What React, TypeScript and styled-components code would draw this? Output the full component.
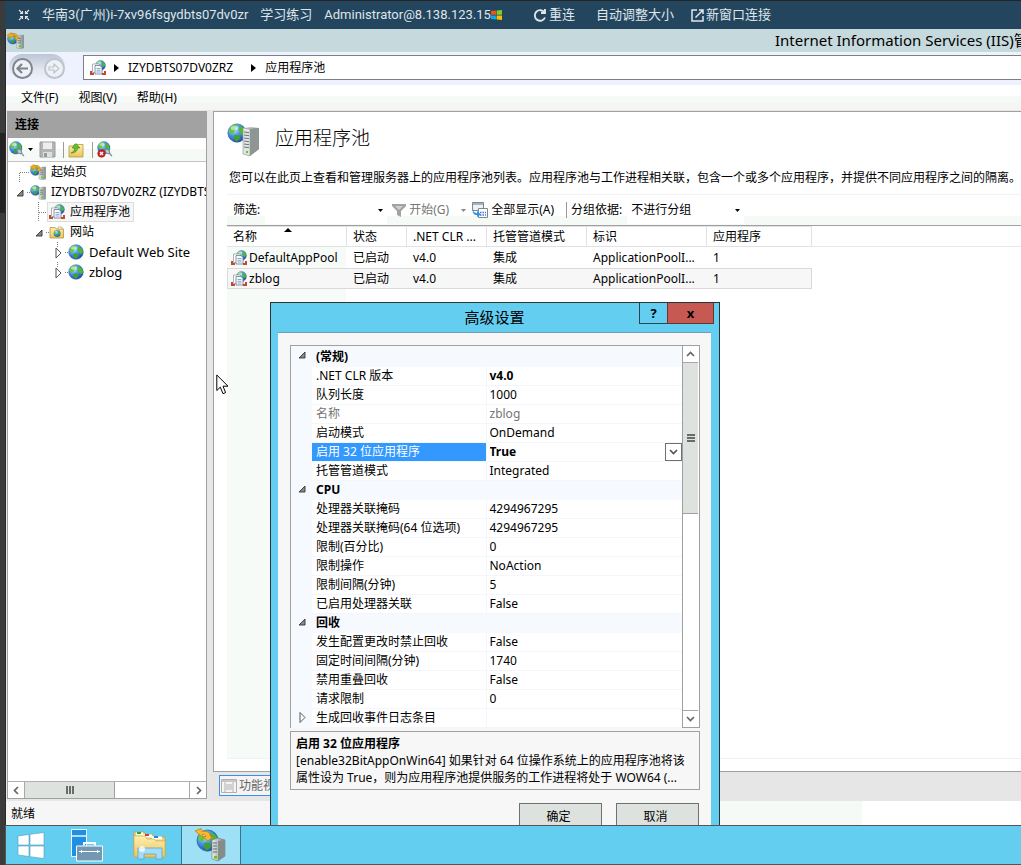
import React from "react";
import styled, { createGlobalStyle, css } from "styled-components";

const uiFont = `"Noto Sans", "Noto Sans CJK SC", sans-serif`;
const remoteFont = `Roboto, "Noto Sans CJK SC", sans-serif`;

const GlobalStyle = createGlobalStyle`
  * { box-sizing: border-box; }
  body {
    margin: 0;
    overflow: hidden;
    background: #fff;
    color: #000;
    font: 12px/18px ${uiFont};
  }
  button, input, select { font: inherit; color: inherit; }
  svg { display: block; flex: none; }
`;

/* ---------- shell ---------- */

const Shell = styled.div`
  display: flex;
  height: 100vh;
  border-top: 1px solid #242424;
`;

const Rail = styled.div`
  flex: none;
  width: 5px;
  background: linear-gradient(#3b3b3b 132px, #232323 132px, #232323 212px, #3b3b3b 212px);
`;

const Screen = styled.div`
  flex: 1;
  min-width: 0;
  display: flex;
  flex-direction: column;
`;

const RemoteBar = styled.header`
  flex: none;
  display: flex;
  align-items: center;
  height: 28px;
  padding-left: 13px;
  background: #24455e;
  color: #dfe5ea;
  font-family: ${remoteFont};
  font-size: 13px;
  white-space: nowrap;
`;

const RemoteText = styled.span`
  margin-left: 12px;
`;

const RemoteAction = styled.button<{ $gap: number }>`
  display: flex;
  align-items: center;
  gap: 2px;
  margin-left: ${(p) => p.$gap}px;
  padding: 0;
  border: 0;
  background: none;
  white-space: nowrap;
`;

const Desktop = styled.div`
  position: relative;
  flex: 1;
  min-height: 0;
  display: flex;
  flex-direction: column;
  overflow: hidden;
  border-left: 1px solid #2a2a2a;
  background: #e7e7e7;
`;

/* ---------- manager window chrome ---------- */

const TitleBar = styled.div`
  flex: none;
  display: flex;
  justify-content: space-between;
  align-items: center;
  height: 23px;
  padding-left: 1px;
  background: #c6d9dd;
  overflow: hidden;
`;

const WindowTitle = styled.h1`
  width: 246px;
  margin: 0;
  font-size: 15px;
  line-height: 23px;
  font-weight: 400;
  white-space: nowrap;
`;

const NavBar = styled.div`
  flex: none;
  display: flex;
  gap: 18px;
  height: 33px;
  padding: 2px 0 0 3px;
  background: #eef2fe;
`;

const NavButtons = styled.div`
  flex: none;
  display: flex;
  gap: 11px;
  width: 56px;
  height: 26px;
  padding: 4px 0 0 3px;
  border-radius: 13px;
  background: linear-gradient(#bcc6d3, #e2e7f0 60%, #eef2fe);
`;

const NavButton = styled.button<{ $dim?: boolean }>`
  flex: none;
  width: 21px;
  height: 21px;
  padding: 0;
  border: 2px solid ${(p) => (p.$dim ? "#bdc4cb" : "#7d858d")};
  border-radius: 50%;
  background: #eef1f5;
  color: ${(p) => (p.$dim ? "#bdc4cb" : "#7d858d")};
`;

const AddressBar = styled.nav`
  flex: 1;
  display: flex;
  align-items: center;
  height: 25px;
  margin-top: 1px;
  padding-left: 6px;
  border: 1px solid #7c7f86;
  border-right: 0;
  background: #fff;
  white-space: nowrap;
`;

const CrumbIcon = styled.span`
  margin-right: 8px;
`;

const Crumb = styled.a<{ $last?: boolean }>`
  margin: 0 ${(p) => (p.$last ? 0 : 18)}px 0 9px;
  color: #000;
  text-decoration: none;
`;

const MenuBar = styled.div`
  flex: none;
  display: flex;
  gap: 20px;
  height: 25px;
  padding-left: 15px;
  background: linear-gradient(#fff 11px, #f5faf6 11px, #f5faf6 18px, #f5f5f5 18px);
`;

const MenuItem = styled.button`
  padding: 0;
  border: 0;
  background: none;
  white-space: nowrap;
`;

const Workspace = styled.main`
  flex: 1;
  min-height: 0;
  display: flex;
  gap: 6px;
  padding-left: 1px;
`;

/* ---------- connections pane ---------- */

const SidePane = styled.aside`
  flex: none;
  width: 200px;
  display: flex;
  flex-direction: column;
  margin: 1px 0 2px;
  border: 1px solid #a0a0a0;
  background: #fff;
`;

const PaneHeader = styled.h2`
  flex: none;
  height: 26px;
  margin: 0;
  padding-left: 7px;
  background: #a2a2a2;
  font-size: 12px;
  line-height: 26px;
`;

const PaneTools = styled.div`
  flex: none;
  display: flex;
  align-items: center;
  height: 24px;
  padding-left: 1px;
  border-bottom: 1px solid #c4c4c4;
  background: linear-gradient(#fff 11px, #f5faf6 11px);
`;

const ToolButton = styled.button<{ $gap?: number }>`
  display: flex;
  align-items: center;
  gap: 2px;
  margin-left: ${(p) => p.$gap ?? 0}px;
  padding: 0;
  border: 0;
  background: none;
`;

const ToolRule = styled.span<{ $before?: number }>`
  flex: none;
  width: 1px;
  height: 16px;
  margin: 0 4px 0 ${(p) => p.$before ?? 7}px;
  background: #9a9a9a;
`;

const Tree = styled.ul`
  flex: 1;
  min-height: 0;
  margin: 0;
  padding: 0;
  list-style: none;
  overflow: hidden;
`;

const TreeRow = styled.li`
  display: flex;
  align-items: center;
  height: 20px;
  white-space: nowrap;
`;

const TreeLabel = styled.a<{ $selected?: boolean; $wide?: boolean }>`
  display: flex;
  align-items: center;
  gap: 5px;
  height: 20px;
  color: #000;
  font-size: ${(p) => (p.$wide ? 13 : 12)}px;
  text-decoration: none;
  ${(p) =>
    p.$selected &&
    css`
      padding: 0 4px 0 2px;
      background: #f6f6f6;
      outline: 1px solid #dcdcdc;
      outline-offset: -1px;
    `}
`;

const HScroll = styled.div`
  flex: none;
  display: flex;
  height: 17px;
  border-top: 1px solid #b0b0b0;
`;

const ScrollButton = styled.button<{ $side: "left" | "right" | "up" | "down" }>`
  flex: none;
  display: grid;
  place-items: center;
  width: ${(p) => (p.$side === "left" || p.$side === "right" ? 17 : 15)}px;
  height: 16px;
  padding: 0;
  border: 0 solid #a8a8a8;
  border-${(p) => ({ left: "right", right: "left", up: "bottom", down: "top" })[p.$side]}-width: 1px;
  background: #fff;
  color: #666;
`;

const HThumb = styled.div`
  display: grid;
  place-items: center;
  width: 90px;
  border-right: 1px solid #a0a0a0;
  background: #dde2df;
`;

const Filler = styled.div`
  flex: 1;
`;

/* ---------- content pane ---------- */

const ContentPane = styled.section`
  flex: 1;
  min-width: 0;
  display: flex;
  flex-direction: column;
  margin-top: 1px;
`;

const Feature = styled.div`
  flex: 1;
  min-height: 0;
  display: flex;
  flex-direction: column;
  padding-left: 13px;
  border: 1px solid #a0a0a0;
  border-right: 0;
  background: #fff;
`;

const FeatureHead = styled.div`
  flex: none;
  display: flex;
  align-items: center;
  gap: 14px;
  height: 57px;
  padding-bottom: 2px;
`;

const FeatureTitle = styled.h2`
  margin: 0;
  padding-bottom: 4px;
  font-size: 19px;
  line-height: 28px;
  font-weight: 300;
`;

const Description = styled.p`
  flex: none;
  margin: 0 0 7px 2px;
  line-height: 18px;
  white-space: nowrap;
`;

const FilterBar = styled.div`
  flex: none;
  display: flex;
  align-items: center;
  height: 32px;
  border-top: 1px solid #f2f2f2;
  border-bottom: 1px solid #a0a0a0;
  background: linear-gradient(#fff 21px, #f5faf6 21px);
  white-space: nowrap;
`;

const FilterLabel = styled.label<{ $gap?: number }>`
  flex: none;
  padding-left: ${(p) => p.$gap ?? 6}px;
`;

const Combo = styled.div<{ $width: number }>`
  flex: none;
  display: flex;
  align-items: center;
  width: ${(p) => p.$width}px;
  height: 27px;
  margin-left: 5px;
  padding: 0 4px;
  background: #fff;
`;

const plainField = css`
  flex: 1;
  min-width: 0;
  height: 18px;
  padding: 0;
  border: 0;
  outline: 0;
  background: none;
  appearance: none;
`;

const FilterInput = styled.input`
  ${plainField}
`;

const GroupSelect = styled.select`
  ${plainField}
`;

const BarButton = styled.button<{ $dim?: boolean; $gap: number }>`
  flex: none;
  display: flex;
  align-items: center;
  gap: 3px;
  margin-left: ${(p) => p.$gap}px;
  padding: 0;
  border: 0;
  background: none;
  color: ${(p) => (p.$dim ? "#757575" : "#000")};
`;

const ListArea = styled.div`
  flex: 1;
  min-height: 0;
  margin-bottom: 12px;
  border-bottom: 1px solid #f1f1f1;
  background:
    linear-gradient(transparent 20px, #e8e8e8 20px, #e8e8e8 21px, transparent 21px),
    linear-gradient(90deg, #f6fbf8 119px, #fff 119px);
`;

const PoolTable = styled.table`
  width: 585px;
  border-collapse: separate;
  border-spacing: 0;
  table-layout: fixed;

  th {
    height: 21px;
    padding: 0 0 0 6px;
    border: solid #e2e2e2;
    border-width: 1px 1px 1px 0;
    background: #fff;
    font-weight: 400;
    text-align: left;
    white-space: nowrap;
  }
  td {
    height: 21px;
    padding: 0 0 0 6px;
    overflow: hidden;
    white-space: nowrap;
  }
  td:first-child { padding-left: 4px; }
`;

const PoolRow = styled.tr<{ $selected: boolean }>`
  ${(p) =>
    p.$selected &&
    css`
      td {
        border: solid #dadada;
        border-width: 1px 0;
        background: #f7f7f7;
      }
      td:first-child { border-left-width: 1px; padding-left: 3px; }
      td:last-child { border-right-width: 1px; }
    `}
`;

const SortHead = styled.span`
  display: flex;
  align-items: flex-start;
  gap: 27px;
`;

const PoolName = styled.span`
  display: flex;
  align-items: center;
  gap: 2px;
`;

const ViewTabs = styled.div`
  flex: none;
  display: flex;
  height: 29px;
  padding: 3px 0 0 6px;
  background: #e6e6e6;
`;

const ViewTab = styled.button`
  display: flex;
  align-items: center;
  gap: 2px;
  height: 21px;
  padding: 0 4px 0 1px;
  border: 1px solid #3c8fe8;
  background: #f4f4f4;
  color: #666;
`;

const StatusBar = styled.footer`
  flex: none;
  height: 24px;
  padding-left: 5px;
  background: linear-gradient(90deg, #f6f6f6 500px, #f5faf6 500px, #f5faf6 856px, #fff 856px);
  line-height: 25px;
`;

/* ---------- dialog ---------- */

const Dialog = styled.section`
  position: absolute;
  left: 264px;
  top: 273px;
  width: 450px;
  padding: 0 8px 8px 7px;
  border: 1px solid #2b3338;
  background: #64cef0;
`;

const DialogTitle = styled.div`
  display: grid;
  grid-template-columns: 1fr auto 1fr;
  height: 29px;
  margin-right: -3px;
`;

const DialogName = styled.h2`
  grid-column: 2;
  margin: 0;
  padding-right: 3px;
  font-size: 15px;
  line-height: 28px;
  font-weight: 400;
`;

const DialogButtons = styled.div`
  display: flex;
  justify-content: flex-end;
`;

const CaptionButton = styled.button<{ $close?: boolean }>`
  width: ${(p) => (p.$close ? 47 : 29)}px;
  height: 21px;
  margin-left: ${(p) => (p.$close ? -1 : 0)}px;
  padding: 0;
  border: 1px solid ${(p) => (p.$close ? "#6a3431" : "#2b4550")};
  border-top: 0;
  background: ${(p) => (p.$close ? "#c65952" : "#64cef0")};
  font-size: 13px;
  font-weight: 700;
  line-height: 18px;
`;

const DialogBody = styled.div`
  padding: 12px 11px 24px 12px;
  border-top: 1px solid #6f9fb8;
  background: #f7f7f7;
`;

const GridFrame = styled.div`
  display: flex;
  height: 383px;
  border: 1px solid #a0a0a0;
  background: #fff;
`;

const PropTable = styled.table`
  flex: 1;
  width: 100%;
  border-collapse: collapse;
  table-layout: fixed;

  tr { height: 19px; }
  tr:first-child { height: 20px; }
  td, th {
    padding: 0 0 0 4px;
    font-weight: 400;
    line-height: 18px;
    text-align: left;
    white-space: nowrap;
    border-bottom: 1px solid #f3f7fd;
  }
  td:last-child { padding-left: 3px; }
  tr:first-child > * { vertical-align: bottom; }
`;

const Gutter = styled.td`
  &&& {
    padding: 0 0 0 7px;
    border-color: #f6faff;
    background: #f6faff;
    vertical-align: middle;
  }
`;

const Category = styled.th`
  &&& {
    background: #f6faff;
    border-color: #f6faff;
    font-weight: 700;
  }
`;

const PropName = styled.th<{ $selected?: boolean; $dim?: boolean }>`
  border-right: 1px solid #f3f7fd;
  color: ${(p) => (p.$selected ? "#fff" : p.$dim ? "#757575" : "#000")};
  background: ${(p) => (p.$selected ? "#3399ff" : "none")};
`;

const PropValue = styled.td<{ $bold?: boolean; $dim?: boolean }>`
  color: ${(p) => (p.$dim ? "#757575" : "#000")};
  && { font-weight: ${(p) => (p.$bold ? 700 : 400)}; }
`;

const ValueEditor = styled.div`
  display: flex;
  height: 18px;
`;

const ValueSelect = styled.select`
  ${plainField}
  font-weight: 700;
`;

const DropButton = styled.button`
  flex: none;
  display: grid;
  place-items: center;
  width: 17px;
  height: 18px;
  padding: 0;
  border: 1px solid #707070;
  background: #fff;
  color: #555;
`;

const VScroll = styled.div`
  flex: none;
  display: flex;
  flex-direction: column;
  width: 17px;
  padding: 1px 1px 1px 0;
  border-left: 1px solid #a0a0a0;
`;

const VThumb = styled.div`
  display: grid;
  place-items: center;
  height: 151px;
  border-bottom: 1px solid #a0a0a0;
  background: #dde2df;
`;

const HelpBox = styled.div`
  height: 59px;
  margin: 3px 0 13px;
  padding: 3px 5px;
  border: 1px solid #a0a0a0;
  line-height: 17px;
  white-space: nowrap;
`;

const HelpTitle = styled.strong`
  display: block;
`;

const HelpText = styled.p`
  margin: 0;
`;

const DialogActions = styled.div`
  display: flex;
  justify-content: flex-end;
  gap: 14px;
  padding-right: 1px;
`;

const ActionButton = styled.button`
  width: 83px;
  height: 28px;
  padding: 0 4px 0 0;
  border: 1px solid #707070;
  background: #dde2df;
`;

const PointerIcon = styled.svg`
  position: absolute;
  left: 210px;
  top: 345px;
`;

/* ---------- taskbar ---------- */

const Taskbar = styled.nav`
  flex: none;
  display: flex;
  gap: 2px;
  height: 40px;
  border: solid #555;
  border-width: 1px 0 1px 1px;
  background: #64cef0;
`;

const Task = styled.button<{ $start?: boolean; $active?: boolean }>`
  flex: none;
  display: grid;
  place-items: center;
  width: ${(p) => (p.$start ? 49 : 60)}px;
  padding: 0;
  border: ${(p) => (p.$active ? "1px solid #3d7489" : "0")};
  border-width: ${(p) => (p.$active ? "0 1px" : "0")};
  background: ${(p) => (p.$active ? "#9ee1f6" : "none")};
`;

/* ---------- icons ---------- */

const HiddenDefs = styled.svg`
  position: absolute;
`;

const Defs = () => (
  <HiddenDefs width="0" height="0" aria-hidden>
    <defs>
      <radialGradient id="sea" cx="0.35" cy="0.3" r="0.8">
        <stop offset="0" stopColor="#c4e8ff" />
        <stop offset="0.45" stopColor="#4a94e6" />
        <stop offset="1" stopColor="#173f9c" />
      </radialGradient>
      <linearGradient id="metal" x1="0" x2="1" y1="0" y2="0">
        <stop offset="0" stopColor="#e9ecec" />
        <stop offset="1" stopColor="#7f8686" />
      </linearGradient>
      <linearGradient id="folder" x1="0" x2="0" y1="0" y2="1">
        <stop offset="0" stopColor="#fff0b0" />
        <stop offset="1" stopColor="#e9c45c" />
      </linearGradient>
    </defs>
  </HiddenDefs>
);

/* Earth drawn on a 16-unit square */
const Earth = () => (
  <g>
    <circle cx="8" cy="8" r="7.3" fill="url(#sea)" stroke="#2a5fa8" strokeWidth="0.5" />
    <path d="M1.500 7c.5-3.500 3-5.500 6-6 1 1 .5 2-1 3C7.500 5 6.500 6 5.500 7.500 4.500 9 2.500 9 1.500 7z" fill="#62c83c" />
    <path d="M10 2.500c2 0 4.500 2 5 5-.5 2.500-2 3-3 2C10.500 8.500 8.500 6 10 2.500z" fill="#4fb832" />
    <path d="M6 9.500c2-.5 4 .5 4.500 2-.5 1.500-1.500 2.500-3 3.200-1.500-1-2.500-3.200-1.500-5.200z" fill="#3fa328" />
    <ellipse cx="6" cy="4" rx="3" ry="1.800" fill="#fff" opacity="0.5" />
  </g>
);

const Tower = () => (
  <g>
    <path d="M0 1.500L5 0h4v15l-4 1-5-1z" fill="url(#metal)" stroke="#7d8484" strokeWidth="0.500" />
    <path d="M1 4h4.500M1 6.500h4.500M1 9h4.500" stroke="#566" strokeWidth="0.900" />
    <rect x="3" y="12" width="2.500" height="2" fill="#4fd000" />
  </g>
);

const GlobeIcon = ({ size = 16 }: { size?: number }) => (
  <svg width={size} height={size} viewBox="0 0 16 16"><Earth /></svg>
);

const SiteServerIcon = ({ arrow, width = 16 }: { arrow?: boolean; width?: number }) => (
  <svg width={width} height={width} viewBox="0 0 16 16">
    <g transform="translate(0 1) scale(.68)"><Earth /></g>
    <g transform="translate(9 3) scale(.75 .8)"><Tower /></g>
    {arrow && <path d="M.5 2.500L4 .5l1 1.500C8 .8 10 2 10 5h1.500L9 7.500 6.500 5H8C8 3.500 7 3 5.500 3.500L6 5l-5-.5z" fill="#f5a81c" stroke="#b87505" strokeWidth=".4" />}
  </svg>
);

const PoolIcon = () => (
  <svg width="16" height="16" viewBox="0 0 16 16">
    <g transform="translate(5 0) scale(.68)"><Earth /></g>
    <path d="M1 11v3h3M15 11v3h-3" fill="none" stroke="#c9452d" strokeWidth="2" />
    <path d="M2.500 4h7v8.500h-7z" fill="#fff" stroke="#98a2ab" strokeWidth="0.800" />
    <path d="M5 5.500h5l2 2V14H5z" fill="#f8fbfe" stroke="#6d7985" strokeWidth="0.800" />
    <path d="M6.500 8.500h4M6.500 10.300h4M6.500 12h4" stroke="#6f93bd" strokeWidth="0.800" />
  </svg>
);

const SitesIcon = () => (
  <svg width="16" height="16" viewBox="0 0 16 16">
    <path d="M1 3.500h5l1 1.500h7.500v9H1z" fill="url(#folder)" stroke="#b8943c" strokeWidth=".8" />
    <path d="M9 3h4v2H9z" fill="#fff" stroke="#b8943c" strokeWidth=".6" />
    <g transform="translate(4.500 6) scale(.45)"><Earth /></g>
  </svg>
);

const PlugGlobeIcon = ({ off }: { off?: boolean }) => (
  <svg width="17" height="17" viewBox="0 0 17 17">
    <g transform="scale(.85)"><Earth /></g>
    <path d="M8 8l4 1 1 4-4-1zM12 12l3 3" fill="#c3d1da" stroke="#7c909c" strokeWidth="1.200" />
    {off && (
      <g>
        <circle cx="4.500" cy="12.500" r="3.800" fill="#cf2222" stroke="#8f1111" strokeWidth=".5" />
        <path d="M3 11l3 3M6 11l-3 3" stroke="#fff" strokeWidth="1.300" />
      </g>
    )}
  </svg>
);

const SaveIcon = () => (
  <svg width="17" height="17" viewBox="0 0 17 17">
    <path d="M1 1h15v15H1z" fill="#b4b4b4" stroke="#9a9a9a" />
    <path d="M4 1.500h9V8H4z" fill="#eee" />
    <path d="M4 11h9v5H4z" fill="#dedede" />
    <path d="M5 12h3v4H5z" fill="#9a9a9a" />
  </svg>
);

const UpFolderIcon = () => (
  <svg width="16" height="16" viewBox="0 0 16 16">
    <path d="M1 4h4l1-1.500h9V15H1z" fill="url(#folder)" stroke="#bd9838" strokeWidth=".8" />
    <path d="M3 11c3-1 3.500-3 3.500-5H4l4-4.500L12 6H9.500c0 3-2.500 5-6.500 5z" fill="#5fc22d" stroke="#37861a" strokeWidth=".6" />
  </svg>
);

const BigServerIcon = () => (
  <svg width="34" height="34" viewBox="0 0 34 34">
    <g transform="translate(0 0) scale(1.250)"><Earth /></g>
    <path d="M16 5l7-1 9 1v21l-9 7-7-2z" fill="url(#metal)" />
    <path d="M16 5l7 1v27l-7-2z" fill="#e0e4e4" stroke="#8a9090" strokeWidth=".6" />
    <path d="M23 6l9-1v21l-9 7z" fill="#8e9595" />
    <path d="M17 9l5 .7M17 12l5 .7M17 15l5 .7M17 18l5 .7M17 21l5 .7M17 24l5 .7" stroke="#6c7676" />
    <rect x="19" y="28" width="2" height="2" fill="#5ad400" />
  </svg>
);

const CaretDown = ({ dim }: { dim?: boolean }) => (
  <svg width="5" height="3" viewBox="0 0 5 3"><path d="M0 0h5L2.500 3z" fill={dim ? "#888" : "#000"} /></svg>
);

const CrumbArrow = () => (
  <svg width="5" height="8" viewBox="0 0 5 8"><path d="M0 0l5 4-5 4z" fill="#000" /></svg>
);

const chevrons = { up: "M1 6l3.500-3.500L8 6", down: "M1 3l3.500 3.500L8 3", left: "M6 1L2.500 4.500 6 8", right: "M3 1l3.500 3.500L3 8" };
const Chevron = ({ dir }: { dir: keyof typeof chevrons }) => (
  <svg width="9" height="9" viewBox="0 0 9 9"><path d={chevrons[dir]} fill="none" stroke="currentColor" strokeWidth="1.700" /></svg>
);

const Grip = ({ vertical }: { vertical?: boolean }) => (
  <svg width="8" height="8" viewBox="0 0 8 8">
    <path d={vertical ? "M1 0v8M4 0v8M7 0v8" : "M0 1h8M0 4h8M0 7h8"} stroke="#6b6b6b" strokeWidth="2" />
  </svg>
);

const openTri = (x: number, y: number) => `M${x} ${y + 6}h6v-6z`;
const shutTri = (x: number, y: number) => `M${x} ${y}l5 5-5 5z`;

const Expander = ({ open }: { open: boolean }) => (
  <svg width="8" height="11" viewBox="0 0 8 11">
    {open ? (
      <path d={openTri(1, 2)} fill="#8a8a8a" stroke="#333" strokeWidth=".9" />
    ) : (
      <path d={shutTri(2, 0.5)} fill="#fff" stroke="#555" />
    )}
  </svg>
);

const Branch = ({ width, lines, open, shut }: { width: number; lines: string; open?: number; shut?: number }) => (
  <svg width={width} height="20" viewBox={`0 0 ${width} 20`}>
    <path d={lines} fill="none" stroke="#808080" strokeDasharray="1 1" shapeRendering="crispEdges" />
    {open !== undefined && <path d={openTri(open, 8)} fill="#8a8a8a" stroke="#333" strokeWidth=".9" />}
    {shut !== undefined && <path d={shutTri(shut, 6)} fill="#fff" stroke="#555" />}
  </svg>
);

const ServerManagerIcon = () => (
  <svg width="32" height="33" viewBox="0 0 32 33">
    <path d="M.5.500h15v27H.5z" fill="#2190e3" stroke="#e8f7ff" />
    <path d="M.5 7h15" stroke="#e8f7ff" strokeWidth="1.500" />
    <path d="M5.500 17h26v15h-26z" fill="#7398b3" stroke="#fff" />
    <path d="M13 16.500v-2.500h11v2.500" fill="none" stroke="#fff" strokeWidth="2" />
    <path d="M8 22.500h21M10.500 21v3M26.500 21v3" stroke="#fff" />
  </svg>
);

const ExplorerIcon = () => (
  <svg width="33" height="30" viewBox="0 0 33 30">
    <path d="M1 2h10l2 3h8l2 2h9v20H1z" fill="#efcf74" stroke="#c79b36" strokeWidth=".7" />
    <path d="M3 2.500h7v3H3z" fill="#fff" /><path d="M4 2h4v2H4z" fill="#27a82e" />
    <path d="M10 4.500h9v3h-9z" fill="#fff" /><path d="M12 4h4v2h-4z" fill="#d63c2a" />
    <path d="M19 6.500h10v3H19z" fill="#fff" /><path d="M21 6h4v2h-4z" fill="#2686d8" />
    <path d="M1 6h11l2 3h7l2 2h9v16H1z" fill="url(#folder)" stroke="#d7ae4b" strokeWidth=".7" />
    <path d="M5 29V18h24v11h-6v-5H11v5z" fill="#a6dcf5" stroke="#57a9d4" strokeWidth=".8" />
    <circle cx="9" cy="19" r="3" fill="#fff" opacity=".75" />
  </svg>
);

const IisTaskIcon = () => (
  <svg width="34" height="34" viewBox="0 0 34 34">
    <g transform="translate(2 1) scale(1.450)"><Earth /></g>
    <path d="M18 12l6-2 7 2v16l-7 5-6-2z" fill="url(#metal)" stroke="#777" strokeWidth=".6" />
    <path d="M24 13v20l7-5V12z" fill="#858c8c" />
    <path d="M19 15h4M19 18h4M19 21h4M19 24h4" stroke="#5f6a6a" />
    <rect x="20" y="28" width="3" height="2.500" fill="#55d400" />
    <path d="M1 3l6-2.500 1 3c5-1 8 1 8.500 5h2.500l-5 4.500-5-4.500h3c-.5-2-2-2.500-4-2l.5 2.500z" fill="#ffb52e" stroke="#ba7908" strokeWidth=".7" />
  </svg>
);

/* ---------- data ---------- */

const pools = [
  { name: "DefaultAppPool", selected: false },
  { name: "zblog", selected: true },
];

type Prop = { name: string; value?: string; kind?: "cat" | "bold" | "dim" | "edit" | "closed" };

const props: Prop[] = [
  { name: "(常规)", kind: "cat" },
  { name: ".NET CLR 版本", value: "v4.0", kind: "bold" },
  { name: "队列长度", value: "1000" },
  { name: "名称", value: "zblog", kind: "dim" },
  { name: "启动模式", value: "OnDemand" },
  { name: "启用 32 位应用程序", value: "True", kind: "edit" },
  { name: "托管管道模式", value: "Integrated" },
  { name: "CPU", kind: "cat" },
  { name: "处理器关联掩码", value: "4294967295" },
  { name: "处理器关联掩码(64 位选项)", value: "4294967295" },
  { name: "限制(百分比)", value: "0" },
  { name: "限制操作", value: "NoAction" },
  { name: "限制间隔(分钟)", value: "5" },
  { name: "已启用处理器关联", value: "False" },
  { name: "回收", kind: "cat" },
  { name: "发生配置更改时禁止回收", value: "False" },
  { name: "固定时间间隔(分钟)", value: "1740" },
  { name: "禁用重叠回收", value: "False" },
  { name: "请求限制", value: "0" },
  { name: "生成回收事件日志条目", value: "", kind: "closed" },
];

const PropertyRow = ({ name, value, kind }: Prop) => {
  if (kind === "cat") {
    return (
      <tr>
        <Gutter><Expander open /></Gutter>
        <Category colSpan={2}>{name}</Category>
      </tr>
    );
  }
  return (
    <tr>
      <Gutter>{kind === "closed" && <Expander open={false} />}</Gutter>
      <PropName scope="row" $selected={kind === "edit"} $dim={kind === "dim"}>{name}</PropName>
      <PropValue $bold={kind === "bold"} $dim={kind === "dim"}>
        {kind === "edit" ? (
          <ValueEditor>
            <ValueSelect aria-label={name} defaultValue={value}>
              <option>True</option>
              <option>False</option>
            </ValueSelect>
            <DropButton aria-label="展开"><Chevron dir="down" /></DropButton>
          </ValueEditor>
        ) : value}
      </PropValue>
    </tr>
  );
};

/* ---------- sections ---------- */

const RemoteHeader = () => (
  <RemoteBar>
    <svg width="12" height="12" viewBox="0 0 12 12" fill="none" stroke="#dfe5ea" strokeWidth="1.100">
      <path d="M1 1l3.500 3.500M4.500 2v2.500H2M11 1L7.500 4.500M7.500 2v2.500H10M1 11l3.500-3.500M2 7.500h2.500V10M11 11L7.500 7.500M10 7.500H7.500V10" />
    </svg>
    <RemoteText>华南3(广州)i-7xv96fsgydbts07dv0zr</RemoteText>
    <RemoteText>学习练习</RemoteText>
    <RemoteText>Administrator@8.138.123.15</RemoteText>
    <svg width="11" height="10" viewBox="0 0 11 10">
      <path d="M0 1l5-.5v4.300H0z" fill="#f1511b" /><path d="M5.600.400L11 0v4.800H5.600z" fill="#80cc28" />
      <path d="M0 5.400h5v4.200L0 9z" fill="#00adef" /><path d="M5.600 5.400H11V10l-5.400-.4z" fill="#fbbc09" />
    </svg>
    <RemoteAction $gap={31}>
      <svg width="14" height="15" viewBox="0 0 14 15" fill="none" stroke="#dfe5ea" strokeWidth="1.900">
        <path d="M11.500 4.500A5.300 5.300 0 1 0 12 9.500M12 1v4H8" />
      </svg>
      重连
    </RemoteAction>
    <RemoteAction $gap={21}>自动调整大小</RemoteAction>
    <RemoteAction $gap={17}>
      <svg width="13" height="13" viewBox="0 0 13 13" fill="none" stroke="#dfe5ea" strokeWidth="1.500">
        <path d="M6 1H1v11h11V7M8 1h4v4M12 1L4.500 8.500" />
      </svg>
      新窗口连接
    </RemoteAction>
  </RemoteBar>
);

const Connections = () => (
  <SidePane>
    <PaneHeader>连接</PaneHeader>
    <PaneTools>
      <ToolButton aria-label="连接到"><PlugGlobeIcon /><CaretDown /></ToolButton>
      <ToolButton $gap={6} aria-label="保存"><SaveIcon /></ToolButton>
      <ToolRule />
      <ToolButton aria-label="向上"><UpFolderIcon /></ToolButton>
      <ToolRule $before={8} />
      <ToolButton aria-label="断开"><PlugGlobeIcon off /></ToolButton>
    </PaneTools>
    <Tree>
      <TreeRow>
        <Branch width={22} lines="M11.500 20V10.500H22" />
        <TreeLabel href="#start"><SiteServerIcon arrow />起始页</TreeLabel>
      </TreeRow>
      <TreeRow>
        <Branch width={22} lines="M18.500 10.500H22" open={9} />
        <TreeLabel href="#server"><SiteServerIcon />IZYDBTS07DV0ZRZ (IZYDBTS07DV0ZRZ\Administrator)</TreeLabel>
      </TreeRow>
      <TreeRow>
        <Branch width={39} lines="M30.500 0V20M30.500 10.500H39" />
        <TreeLabel $selected href="#pools"><PoolIcon />应用程序池</TreeLabel>
      </TreeRow>
      <TreeRow>
        <Branch width={41} lines="M37.500 10.500H41" open={28} />
        <TreeLabel href="#sites"><SitesIcon />网站</TreeLabel>
      </TreeRow>
      <TreeRow>
        <Branch width={60} lines="M49.500 0V5M56.500 10.500H60" shut={48} />
        <TreeLabel $wide href="#default"><GlobeIcon />Default Web Site</TreeLabel>
      </TreeRow>
      <TreeRow>
        <Branch width={60} lines="M49.500 0V5M56.500 10.500H60" shut={48} />
        <TreeLabel $wide href="#zblog"><GlobeIcon />zblog</TreeLabel>
      </TreeRow>
    </Tree>
    <HScroll>
      <ScrollButton $side="left" aria-label="向左"><Chevron dir="left" /></ScrollButton>
      <HThumb><Grip vertical /></HThumb>
      <Filler />
      <ScrollButton $side="right" aria-label="向右"><Chevron dir="right" /></ScrollButton>
    </HScroll>
  </SidePane>
);

const Pools = () => (
  <ContentPane>
    <Feature>
      <FeatureHead>
        <BigServerIcon />
        <FeatureTitle>应用程序池</FeatureTitle>
      </FeatureHead>
      <Description>您可以在此页上查看和管理服务器上的应用程序池列表。应用程序池与工作进程相关联，包含一个或多个应用程序，并提供不同应用程序之间的隔离。</Description>
      <FilterBar>
        <FilterLabel htmlFor="filter">筛选:</FilterLabel>
        <Combo $width={122}>
          <FilterInput id="filter" />
          <CaretDown />
        </Combo>
        <BarButton $dim $gap={5}>
          <svg width="14" height="13" viewBox="0 0 14 13"><path d="M0 0h14v2L9 7v6l-4-2V7L0 2z" fill="#a2a2a2" /><path d="M3 2h8L7 6z" fill="#cfcfcf" /></svg>
          开始(G)
        </BarButton>
        <BarButton $dim $gap={12} aria-label="开始选项"><CaretDown dim /></BarButton>
        <BarButton $gap={6}>
          <svg width="16" height="16" viewBox="0 0 16 16">
            <path d="M.5.500h11v8H.5z" fill="#eef2f6" stroke="#7c8792" /><path d="M1 1h10v2H1z" fill="#a9b3bd" />
            <path d="M6.500 6.500h9v9h-9z" fill="#fff" stroke="#7c8792" />
            <path d="M8 10.500h6M8 13h6" stroke="#4a78c4" strokeWidth="1.500" strokeDasharray="1.500 1" />
            <path d="M1 7c0 3 2 4 4 4V9l4 3.500L5 15v-2C2 13 0 11 1 7z" fill="#2f97dd" />
          </svg>
          全部显示(A)
        </BarButton>
        <ToolRule $before={12} />
        <FilterLabel $gap={0} htmlFor="group">分组依据:</FilterLabel>
        <Combo $width={117}>
          <GroupSelect id="group"><option>不进行分组</option></GroupSelect>
          <CaretDown />
        </Combo>
      </FilterBar>
      <ListArea>
        <PoolTable>
          <colgroup>
            <col style={{ width: 120 }} /><col style={{ width: 60 }} /><col style={{ width: 80 }} />
            <col style={{ width: 100 }} /><col style={{ width: 120 }} /><col />
          </colgroup>
          <thead>
            <tr>
              <th>
                <SortHead>
                  名称
                  <svg width="8" height="4" viewBox="0 0 8 4"><path d="M0 4l4-4 4 4z" fill="#000" /></svg>
                </SortHead>
              </th>
              <th>状态</th><th>.NET CLR ...</th><th>托管管道模式</th><th>标识</th><th>应用程序</th>
            </tr>
          </thead>
          <tbody>
            {pools.map((p) => (
              <PoolRow key={p.name} $selected={p.selected}>
                <td><PoolName><PoolIcon />{p.name}</PoolName></td>
                <td>已启动</td><td>v4.0</td><td>集成</td><td>ApplicationPoolI...</td><td>1</td>
              </PoolRow>
            ))}
          </tbody>
        </PoolTable>
      </ListArea>
    </Feature>
    <ViewTabs>
      <ViewTab>
        <svg width="16" height="16" viewBox="0 0 16 16">
          <path d="M.5 1.500h15v13H.5z" fill="#f4f4f4" stroke="#b0b0b0" /><path d="M1 2h14v2H1z" fill="#c8c8c8" />
          <path d="M5 7h6M5 9h6M5 11h6M4 4v10M12 4v10" stroke="#b0b0b0" />
        </svg>
        功能视图
      </ViewTab>
    </ViewTabs>
  </ContentPane>
);

const AdvancedSettings = () => (
  <Dialog role="dialog" aria-labelledby="dialog-name">
    <DialogTitle>
      <DialogName id="dialog-name">高级设置</DialogName>
      <DialogButtons>
        <CaptionButton aria-label="帮助">?</CaptionButton>
        <CaptionButton $close aria-label="关闭">x</CaptionButton>
      </DialogButtons>
    </DialogTitle>
    <DialogBody>
      <GridFrame>
        <PropTable>
          <colgroup><col style={{ width: 21 }} /><col style={{ width: 174 }} /><col /></colgroup>
          <tbody>
            {props.map((p) => <PropertyRow key={p.name} {...p} />)}
          </tbody>
        </PropTable>
        <VScroll>
          <ScrollButton $side="up" aria-label="向上滚动"><Chevron dir="up" /></ScrollButton>
          <VThumb><Grip /></VThumb>
          <Filler />
          <ScrollButton $side="down" aria-label="向下滚动"><Chevron dir="down" /></ScrollButton>
        </VScroll>
      </GridFrame>
      <HelpBox>
        <HelpTitle>启用 32 位应用程序</HelpTitle>
        <HelpText>
          [enable32BitAppOnWin64] 如果针对 64 位操作系统上的应用程序池将该<br />
          属性设为 True，则为应用程序池提供服务的工作进程将处于 WOW64 (...
        </HelpText>
      </HelpBox>
      <DialogActions>
        <ActionButton>确定</ActionButton>
        <ActionButton>取消</ActionButton>
      </DialogActions>
    </DialogBody>
  </Dialog>
);

export default function App() {
  return (
    <Shell>
      <GlobalStyle />
      <Defs />
      <Rail />
      <Screen>
        <RemoteHeader />
        <Desktop>
          <TitleBar>
            <SiteServerIcon arrow width={17} />
            <WindowTitle>Internet Information Services (IIS)管理器</WindowTitle>
          </TitleBar>
          <NavBar>
            <NavButtons>
              <NavButton aria-label="后退">
                <svg width="17" height="17" viewBox="0 0 17 17"><path d="M14 8.500H4M8 4L3.500 8.500 8 13" fill="none" stroke="currentColor" strokeWidth="2.200" /></svg>
              </NavButton>
              <NavButton $dim aria-label="前进">
                <svg width="17" height="17" viewBox="0 0 17 17"><path d="M3 7h5V4l5 4.500L8 13v-3H3z" fill="none" stroke="currentColor" strokeWidth="1.200" /></svg>
              </NavButton>
            </NavButtons>
            <AddressBar>
              <CrumbIcon><PoolIcon /></CrumbIcon>
              <CrumbArrow />
              <Crumb href="#server">IZYDBTS07DV0ZRZ</Crumb>
              <CrumbArrow />
              <Crumb $last href="#pools">应用程序池</Crumb>
            </AddressBar>
          </NavBar>
          <MenuBar>
            <MenuItem>文件(F)</MenuItem>
            <MenuItem>视图(V)</MenuItem>
            <MenuItem>帮助(H)</MenuItem>
          </MenuBar>
          <Workspace>
            <Connections />
            <Pools />
          </Workspace>
          <StatusBar>就绪</StatusBar>
          <PointerIcon width="13" height="22" viewBox="0 0 13 22">
            <path d="M.8 1v15.500l3.500-3.300 2.700 6.500 2.600-1.100L7 12.200h5z" fill="#fff" stroke="#000" />
          </PointerIcon>
          <AdvancedSettings />
        </Desktop>
        <Taskbar>
          <Task $start aria-label="开始">
            <svg width="28" height="27" viewBox="0 0 28 27">
              <path d="M1 4l11-1.500V13H1zM13 2.300L27 .5V13H13zM1 14h11v10.500L1 23zM13 14h14v12.500L13 24.700z" fill="#fff" stroke="#4a9fbd" strokeWidth=".6" />
            </svg>
          </Task>
          <Task aria-label="服务器管理器"><ServerManagerIcon /></Task>
          <Task aria-label="文件资源管理器"><ExplorerIcon /></Task>
          <Task $active aria-label="IIS 管理器"><IisTaskIcon /></Task>
        </Taskbar>
      </Screen>
    </Shell>
  );
}
